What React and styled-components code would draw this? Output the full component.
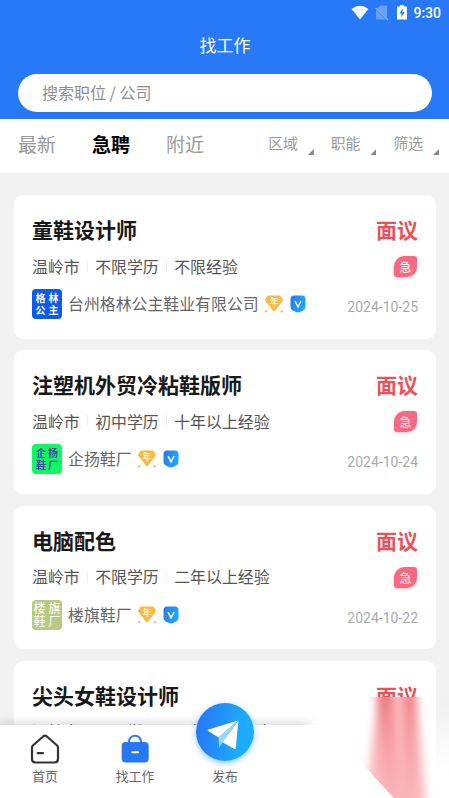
import React from 'react';
import styled, { createGlobalStyle } from 'styled-components';

const jobs = [
  {
    title: '童鞋设计师',
    tags: ['温岭市', '不限学历', '不限经验'],
    company: '台州格林公主鞋业有限公司',
    logo: { text: '格林公主', bg: '#0a5cf0', color: '#fff', size: 10, gap: 3, bold: true },
    date: '2024-10-25',
  },
  {
    title: '注塑机外贸冷粘鞋版师',
    tags: ['温岭市', '初中学历', '十年以上经验'],
    company: '企扬鞋厂',
    logo: { text: '企扬鞋厂', bg: '#10f862', color: '#4d3fae', size: 10, gap: 2, bold: true },
    date: '2024-10-24',
  },
  {
    title: '电脑配色',
    tags: ['温岭市', '不限学历', '二年以上经验'],
    company: '楼旗鞋厂',
    logo: { text: '楼旗鞋厂', bg: '#b8ca82', color: '#fff', size: 12, gap: 3 },
    date: '2024-10-22',
  },
  {
    title: '尖头女鞋设计师',
    tags: ['温岭市', '不限学历', '三年以上经验'],
    company: '温岭鞋厂',
    logo: { text: '温岭鞋厂', bg: '#0a5cf0', color: '#fff', size: 10, gap: 3, bold: true },
    date: '2024-10-22',
  },
];

const tabs = ['最新', '急聘', '附近'];
const filters = ['区域', '职能', '筛选'];

function StatusIcons() {
  return (
    <svg width="56" height="18" viewBox="0 0 56 18" fill="#fff">
      <path d="M0.5 5 Q9 -1.5 17.5 5 L9 15.5Z" />
      <path d="M26 4.5 L29.5 1.5 H36 V14 Z M25 6 L34.5 15.5 H25Z" opacity="0.3" />
      <path d="M24.5 4 L37 16" stroke="#fff" strokeWidth="1.1" opacity="0.45" />
      <path d="M46 2.5 H49 V1 H53 V2.5 H56 V15.5 H46Z" />
      <path d="M52 4.5 L48.3 9.5 H50.7 L50 13.5 L53.8 8.2 H51.4Z" fill="#2779f5" />
    </svg>
  );
}

function YearBadge() {
  return (
    <svg width="20" height="18" viewBox="0 0 20 18">
      <path d="M4.3 0.5 H15.7 Q16.4 0.5 16.8 1.1 L18.8 4.6 Q19.2 5.4 18.6 6.1 L11 15.8 Q10 17 9 15.8 L1.4 6.1 Q0.8 5.4 1.2 4.6 L3.2 1.1 Q3.6 0.5 4.3 0.5Z" fill="#fcb941" />
      <circle cx="2.2" cy="16.2" r="1.2" fill="#f8bd72" />
      <circle cx="17.8" cy="16.2" r="1.2" fill="#f8bd72" />
      <text x="10" y="9.6" textAnchor="middle" fontSize="9" fontWeight="700" fill="#fff3d2">年</text>
    </svg>
  );
}

function VerifiedBadge() {
  return (
    <svg width="16" height="18" viewBox="0 0 16 18">
      <defs>
        <linearGradient id="verified" x1="0" x2="1" y1="0" y2="0.4">
          <stop offset="0" stopColor="#2878f4" />
          <stop offset="1" stopColor="#1da8f8" />
        </linearGradient>
      </defs>
      <path d="M4 0.5 H12 Q15.5 0.5 15.5 4 V12 Q15.5 14.3 13.3 15.5 L10 17 Q8 17.8 6 17 L2.7 15.5 Q0.5 14.3 0.5 12 V4 Q0.5 0.5 4 0.5Z" fill="url(#verified)" />
      <path d="M5 6 L8 11.8 L11 6" fill="none" stroke="#fff" strokeWidth="1.5" />
    </svg>
  );
}

function HomeIcon() {
  return (
    <svg width="30" height="31" viewBox="0 0 30 31" fill="none" stroke="#333" strokeWidth="2.2" strokeLinecap="round" strokeLinejoin="round">
      <path d="M2 13.5 Q2 12.3 2.9 11.5 L13.4 2.2 Q15 0.9 16.6 2.2 L27.1 11.5 Q28 12.3 28 13.5 V25 Q28 28.5 24.5 28.5 H5.5 Q2 28.5 2 25Z" />
      <path d="M7.7 19.2 H13" />
    </svg>
  );
}

function WorkIcon() {
  return (
    <svg width="30" height="31" viewBox="0 0 30 31">
      <path d="M9 9 V7.4 A6 5.6 0 0 1 21 7.4 V9" fill="none" stroke="#2f7af2" strokeWidth="2" />
      <rect x="1.7" y="8" width="27" height="20.6" rx="4" fill="#2878f3" />
      <path d="M12.2 18.3 H18" stroke="#fff" strokeWidth="2" strokeLinecap="round" />
    </svg>
  );
}

function PlaneIcon() {
  return (
    <svg width="32" height="30" viewBox="0 0 32 30">
      <path d="M11.5 17.5 L31 0.5 L16 21.5 L12.2 27.8Z" fill="#9bd6fa" />
      <path d="M1 10.8 Q0 10.2 1 9.8 L30.8 0.5 L11.5 17.4Z" fill="#fff" />
      <path d="M31.5 0.5 L28.7 28.3 Q28.5 29.5 27.4 29 L15.5 22.3Z" fill="#fff" />
    </svg>
  );
}

function Streaks() {
  return (
    <svg width="151" height="101" viewBox="0 0 151 101">
      <defs>
        <filter id="soft" x="-50%" y="-20%" width="200%" height="140%">
          <feGaussianBlur stdDeviation="4 1" />
        </filter>
        <linearGradient id="streak" x1="0" x2="0" y1="0" y2="1">
          <stop offset="0" stopColor="#e8666e" stopOpacity="0.85" />
          <stop offset="0.45" stopColor="#ef8088" stopOpacity="0.5" />
          <stop offset="1" stopColor="#f8a0a6" stopOpacity="0.1" />
        </linearGradient>
        <clipPath id="corner">
          <path d="M55 0 H151 V101 H96 L55 57Z" />
        </clipPath>
      </defs>
      <g clipPath="url(#corner)">
        <path d="M80 -6 H119 L128 110 H78 L71 75Z" fill="#fbb9bd" filter="url(#soft)" />
        <path d="M80 -6 H93 L103 110 H84Z" fill="url(#streak)" filter="url(#soft)" />
        <path d="M107 -6 H116 L118 110 H106Z" fill="url(#streak)" filter="url(#soft)" />
      </g>
    </svg>
  );
}

function JobCard({ job }) {
  return (
    <Card>
      <Row>
        <Title>{job.title}</Title>
        <Salary>面议</Salary>
      </Row>
      <MetaRow>
        <Tags>
          {job.tags.map((tag) => (
            <Tag key={tag}>{tag}</Tag>
          ))}
        </Tags>
        <Urgent>急</Urgent>
      </MetaRow>
      <CompanyRow>
        <Logo $bg={job.logo.bg} $color={job.logo.color} $size={job.logo.size} $gap={job.logo.gap} $bold={job.logo.bold}>
          {[...job.logo.text].map((char) => (
            <span key={char}>{char}</span>
          ))}
        </Logo>
        <Company>{job.company}</Company>
        <Badges>
          <YearBadge />
          <VerifiedBadge />
        </Badges>
        <PostDate>{job.date}</PostDate>
      </CompanyRow>
    </Card>
  );
}

function App() {
  return (
    <>
      <GlobalStyle />
      <Screen>
        <Header>
          <StatusBar>
            <StatusIcons />
            <Clock>9:30</Clock>
          </StatusBar>
          <PageTitle>找工作</PageTitle>
          <Search>搜索职位 / 公司</Search>
        </Header>
        <FilterBar>
          <Tabs>
            {tabs.map((tab) => (
              <Tab key={tab} $active={tab === '急聘'}>{tab}</Tab>
            ))}
          </Tabs>
          <Filters>
            {filters.map((filter) => (
              <Filter key={filter}>{filter}</Filter>
            ))}
          </Filters>
        </FilterBar>
        <JobList>
          {jobs.map((job) => (
            <JobCard key={job.title} job={job} />
          ))}
        </JobList>
        <BottomBar>
          <NavItem>
            <HomeIcon />
            <NavLabel>首页</NavLabel>
          </NavItem>
          <NavItem>
            <WorkIcon />
            <NavLabel>找工作</NavLabel>
          </NavItem>
          <NavItem>
            <PublishButton>
              <PlaneIcon />
            </PublishButton>
            <NavLabel>发布</NavLabel>
          </NavItem>
        </BottomBar>
        <CornerFade>
          <Streaks />
        </CornerFade>
      </Screen>
    </>
  );
}

const GlobalStyle = createGlobalStyle`
  * {
    box-sizing: border-box;
  }

  body {
    margin: 0;
    overflow: hidden;
    font-family: 'Noto Sans CJK SC', sans-serif;
  }

  svg {
    display: block;
    flex-shrink: 0;
  }
`;

const Screen = styled.div`
  position: relative;
  display: flex;
  flex-direction: column;
  width: 449px;
  height: 798px;
  overflow: hidden;
  background: #f2f2f2;
`;

const Header = styled.header`
  flex: none;
  height: 119px;
  padding: 0 17px 0 18px;
  background: #2779f7;
  color: #fff;
`;

const StatusBar = styled.div`
  display: flex;
  justify-content: flex-end;
  align-items: center;
  gap: 6px;
  height: 25px;
  margin-right: -9px;
`;

const Clock = styled.span`
  font: 500 14px/18px Roboto, sans-serif;
`;

const PageTitle = styled.h1`
  height: 49px;
  margin: 0;
  font-size: 17px;
  font-weight: 400;
  line-height: 40px;
  text-align: center;
`;

const Search = styled.div`
  height: 38px;
  padding-left: 24px;
  border-radius: 19px;
  background: #fff;
  color: #8e8e8e;
  font-size: 16px;
  line-height: 37px;
`;

const FilterBar = styled.div`
  display: flex;
  flex: none;
  justify-content: space-between;
  height: 54px;
  padding: 0 10px 0 18px;
  background: #fff;
`;

const Tabs = styled.div`
  display: flex;
  gap: 36px;
`;

const Tab = styled.span`
  color: ${({ $active }) => ($active ? '#000' : '#999')};
  font-size: 19px;
  font-weight: ${({ $active }) => ($active ? 700 : 400)};
  line-height: 50px;
`;

const Filters = styled.div`
  display: flex;
  gap: 17px;
`;

const Filter = styled.span`
  display: flex;
  gap: 10px;
  color: #999;
  font-size: 14.8px;
  line-height: 48px;

  &::after {
    content: '';
    width: 6px;
    height: 6px;
    margin-top: 30px;
    background: #888;
    clip-path: polygon(100% 0, 100% 100%, 0 100%);
  }
`;

const JobList = styled.main`
  display: flex;
  flex-direction: column;
  gap: 11.8px;
  padding: 22.4px 13px 0 14px;
`;

const Card = styled.article`
  flex: none;
  height: 143.3px;
  padding: 17px 18px 0;
  border-radius: 9px;
  background: #fff;
`;

const Row = styled.div`
  display: flex;
  justify-content: space-between;
  height: 36px;
  line-height: 35px;
`;

const Title = styled.h2`
  margin: 0;
  color: #191919;
  font-size: 21px;
  font-weight: 700;
`;

const Salary = styled.strong`
  color: #ee5058;
  font-size: 21px;
  font-weight: 700;
`;

const MetaRow = styled.div`
  display: flex;
  justify-content: space-between;
  height: 36px;
`;

const Tags = styled.div`
  display: flex;
  color: #555;
  font-size: 15.9px;
  line-height: 35px;
`;

const Tag = styled.span`
  display: flex;
  align-items: center;

  & + &::before {
    content: '';
    width: 1px;
    height: 12px;
    margin: 0 7px 0 7.5px;
    background: #eee;
  }
`;

const Urgent = styled.span`
  width: 23px;
  height: 21px;
  margin: 8px 1px 0 0;
  border-radius: 11px 3px 10px 3px;
  background: #fa6780;
  box-shadow: 0 1px 3px rgba(250, 103, 128, 0.4);
  color: #fff;
  font-size: 12px;
  line-height: 21px;
  text-align: center;
`;

const CompanyRow = styled.div`
  display: flex;
  align-items: center;
  height: 40px;
`;

const Logo = styled.div`
  display: grid;
  grid-template-columns: auto auto;
  place-content: center;
  column-gap: ${({ $gap }) => $gap}px;
  width: 30px;
  height: 30px;
  border-radius: 4px;
  background: ${({ $bg }) => $bg};
  color: ${({ $color }) => $color};
  font-size: ${({ $size }) => $size}px;
  font-weight: ${({ $bold }) => ($bold ? 700 : 400)};
  line-height: 12.5px;
`;

const Company = styled.span`
  margin-left: 6px;
  color: #666;
  font-size: 15.9px;
  line-height: 30px;
`;

const Badges = styled.div`
  display: flex;
  gap: 6px;
  margin-left: 5.5px;
`;

const PostDate = styled.time`
  margin: 6px 0 0 auto;
  color: #aaa;
  font: 14px/20px Roboto, sans-serif;
`;

const BottomBar = styled.nav`
  position: absolute;
  right: 0;
  bottom: 0;
  left: 0;
  display: grid;
  grid-template-rows: 73px;
  grid-template-columns: repeat(5, 90px);
  height: 73px;
  background: #fff;
  box-shadow: 0 -2px 9px rgba(0, 0, 0, 0.17);
`;

const NavItem = styled.div`
  display: flex;
  flex-direction: column;
  align-items: center;
  justify-content: flex-end;
  padding-bottom: 12px;
`;

const NavLabel = styled.span`
  margin-top: 1px;
  color: #666;
  font-size: 12.8px;
  line-height: 20px;
`;

const PublishButton = styled.div`
  display: flex;
  flex: none;
  align-items: center;
  justify-content: center;
  width: 58px;
  height: 58px;
  margin-bottom: 4px;
  padding: 6px 5px 0 0;
  border-radius: 50%;
  background: linear-gradient(100deg, #2778f4 8%, #1cacfd 75%);
  box-shadow: 0 2px 6px rgba(39, 140, 255, 0.5);
`;

/* white haze over the lower right corner */
const CornerFade = styled.div`
  position: absolute;
  right: 0;
  bottom: 0;
  width: 151px;
  height: 101px;
  background:
    linear-gradient(#f0f0f0, rgba(255, 255, 255, 0) 75%) right / 13px 100% no-repeat,
    #fff;
  mask-image: linear-gradient(90deg, transparent, #000 22px);
`;

export default App;
